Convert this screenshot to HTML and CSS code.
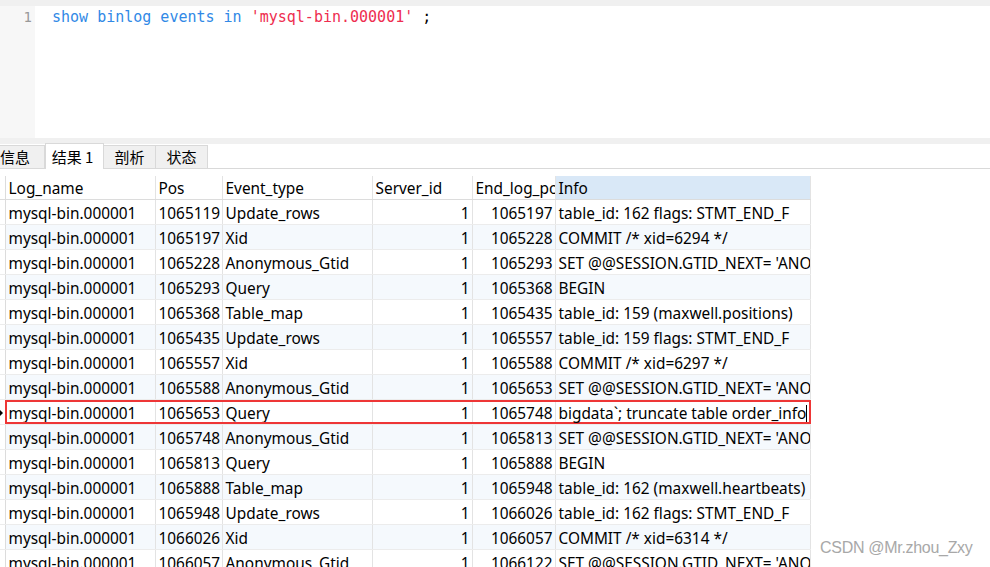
FILE: index.html
```html
<!DOCTYPE html>
<html>
<head>
<meta charset="utf-8">
<link rel="stylesheet" href="styles.css">
</head>
<body>
<div class="app">
  <div class="topstrip"></div>
  <div class="editor">
    <div class="gutter"><span class="lnum">1</span></div>
    <div class="code"><span class="kw">show binlog events in</span> <span class="str">'mysql-bin.000001'</span> ;</div>
  </div>
  <div class="splitter"></div>
  <div class="tabs">
    <div class="tab tab-first">信息</div>
    <div class="tab active">结果 1</div>
    <div class="tab">剖析</div>
    <div class="tab">状态</div>
  </div>
  <div class="gridwrap">
    <table class="grid">
      <colgroup>
        <col class="c0"><col class="c1"><col class="c2"><col class="c3"><col class="c4"><col class="c5"><col class="c6">
      </colgroup>
      <thead>
        <tr><th class="mk"></th><th>Log_name</th><th>Pos</th><th>Event_type</th><th>Server_id</th><th>End_log_pos</th><th class="sel">Info</th></tr>
      </thead>
      <tbody>
        <tr><td class="mk"></td><td>mysql-bin.000001</td><td>1065119</td><td>Update_rows</td><td class="r">1</td><td class="r">1065197</td><td>table_id: 162 flags: STMT_END_F</td></tr>
        <tr><td class="mk"></td><td>mysql-bin.000001</td><td>1065197</td><td>Xid</td><td class="r">1</td><td class="r">1065228</td><td>COMMIT /* xid=6294 */</td></tr>
        <tr><td class="mk"></td><td>mysql-bin.000001</td><td>1065228</td><td>Anonymous_Gtid</td><td class="r">1</td><td class="r">1065293</td><td>SET @@SESSION.GTID_NEXT= 'ANONYMOUS'</td></tr>
        <tr><td class="mk"></td><td>mysql-bin.000001</td><td>1065293</td><td>Query</td><td class="r">1</td><td class="r">1065368</td><td>BEGIN</td></tr>
        <tr><td class="mk"></td><td>mysql-bin.000001</td><td>1065368</td><td>Table_map</td><td class="r">1</td><td class="r">1065435</td><td>table_id: 159 (maxwell.positions)</td></tr>
        <tr><td class="mk"></td><td>mysql-bin.000001</td><td>1065435</td><td>Update_rows</td><td class="r">1</td><td class="r">1065557</td><td>table_id: 159 flags: STMT_END_F</td></tr>
        <tr><td class="mk"></td><td>mysql-bin.000001</td><td>1065557</td><td>Xid</td><td class="r">1</td><td class="r">1065588</td><td>COMMIT /* xid=6297 */</td></tr>
        <tr><td class="mk"></td><td>mysql-bin.000001</td><td>1065588</td><td>Anonymous_Gtid</td><td class="r">1</td><td class="r">1065653</td><td>SET @@SESSION.GTID_NEXT= 'ANONYMOUS'</td></tr>
        <tr class="current"><td class="mk"><span class="arrow"></span></td><td class="first"><span class="redbox"></span>mysql-bin.000001</td><td>1065653</td><td>Query</td><td class="r">1</td><td class="r">1065748</td><td class="last">bigdata`; truncate table order_info<span class="caret"></span></td></tr>
        <tr><td class="mk"></td><td>mysql-bin.000001</td><td>1065748</td><td>Anonymous_Gtid</td><td class="r">1</td><td class="r">1065813</td><td>SET @@SESSION.GTID_NEXT= 'ANONYMOUS'</td></tr>
        <tr><td class="mk"></td><td>mysql-bin.000001</td><td>1065813</td><td>Query</td><td class="r">1</td><td class="r">1065888</td><td>BEGIN</td></tr>
        <tr><td class="mk"></td><td>mysql-bin.000001</td><td>1065888</td><td>Table_map</td><td class="r">1</td><td class="r">1065948</td><td>table_id: 162 (maxwell.heartbeats)</td></tr>
        <tr><td class="mk"></td><td>mysql-bin.000001</td><td>1065948</td><td>Update_rows</td><td class="r">1</td><td class="r">1066026</td><td>table_id: 162 flags: STMT_END_F</td></tr>
        <tr><td class="mk"></td><td>mysql-bin.000001</td><td>1066026</td><td>Xid</td><td class="r">1</td><td class="r">1066057</td><td>COMMIT /* xid=6314 */</td></tr>
        <tr><td class="mk"></td><td>mysql-bin.000001</td><td>1066057</td><td>Anonymous_Gtid</td><td class="r">1</td><td class="r">1066122</td><td>SET @@SESSION.GTID_NEXT= 'ANONYMOUS'</td></tr>
      </tbody>
    </table>
    <div class="watermark">CSDN @Mr.zhou_Zxy</div>
  </div>
</div>
</body>
</html>
```
FILE: styles.css
```css
html, body {
  margin: 0;
  padding: 0;
  background: #ffffff;
  overflow: hidden;
}
.app {
  width: 990px;
  height: 567px;
  overflow: hidden;
  display: flex;
  flex-direction: column;
  font-family: "Noto Sans", "Noto Sans CJK SC", sans-serif;
}
.topstrip {
  height: 6px;
  background: #f0f0f0;
  flex: none;
}
.editor {
  height: 132px;
  display: flex;
  flex: none;
  background: #ffffff;
}
.gutter {
  width: 35px;
  background: #f7f7f7;
  display: flex;
  justify-content: flex-end;
  flex: none;
}
.lnum {
  font-family: "DejaVu Sans Mono", monospace;
  font-size: 14px;
  color: #999999;
  padding-right: 3px;
  line-height: 22px;
}
.code {
  font-family: "DejaVu Sans Mono", monospace;
  font-size: 15px;
  line-height: 22px;
  padding-left: 17px;
  color: #000000;
  white-space: pre;
}
.kw { color: #3189e6; }
.str { color: #ee2d50; }
.splitter {
  height: 6px;
  background: #f0f0f0;
  flex: none;
}
.tabs {
  height: 24px;
  display: flex;
  align-items: flex-end;
  border-bottom: 1px solid #d9d9d9;
  flex: none;
  font-family: "Noto Sans CJK SC", sans-serif;
  font-size: 15px;
}
.tab {
  height: 22px;
  line-height: 22px;
  background: #f0f0f0;
  border: 1px solid #d9d9d9;
  border-bottom: none;
  border-left: none;
  color: #000;
  width: 51px;
  box-sizing: content-box;
  text-align: center;
}
.tab-first {
  width: 44px;
  text-align: left;
}
.tab.active {
  background: #ffffff;
  height: 25px;
  line-height: 25px;
  width: 57px;
  margin-bottom: -1px;
  border-left: 1px solid #d9d9d9;
  text-indent: -4px;
}
.gridwrap {
  flex: 1;
  padding-top: 7px;
  position: relative;
}
.grid {
  table-layout: fixed;
  border-collapse: collapse;
  width: 810px;
  font-size: 15.4px;
  color: #000;
}
.c0 { width: 5px; }
.c1 { width: 150px; }
.c2 { width: 67px; }
.c3 { width: 150px; }
.c4 { width: 100px; }
.c5 { width: 83px; }
.c6 { width: 255px; }
.grid th, .grid td {
  height: 21px;
  padding: 3px 2px 0 3px;
  border-right: 1px solid #e3e3e3;
  border-bottom: 1px solid #ececec;
  white-space: nowrap;
  overflow: hidden;
  text-overflow: clip;
  text-align: left;
  font-weight: normal;
  line-height: 21px;
}
.grid th {
  border-bottom: 1px solid #dcdcdc;
  height: 21px;
  padding-top: 2px;
  line-height: 21px;
}
.grid th.sel {
  background: #d9e8f7;
}
.grid .mk {
  padding: 0;
  border-right: 1px solid #dcdcdc;
  position: relative;
  overflow: visible;
}
.grid td.r {
  text-align: right;
}
.grid tbody tr:nth-child(even) td {
  background: #f5f9fd;
}
.grid tbody tr td.mk {
  background: #ffffff;
}
.current td.first {
  position: relative;
  overflow: visible;
}
.redbox {
  position: absolute;
  left: -1px;
  top: 0;
  width: 806px;
  height: 24px;
  border: 2px solid #ee3636;
  box-sizing: border-box;
  pointer-events: none;
}
.current td.last {
  position: relative;
}
.arrow {
  position: absolute;
  left: 0;
  top: 10px;
  width: 0;
  height: 0;
  border-top: 3px solid transparent;
  border-bottom: 3px solid transparent;
  border-left: 3px solid #000;
}
.caret {
  position: absolute;
  right: 3px;
  top: 5px;
  width: 1px;
  height: 17px;
  background: #000;
}
.watermark {
  position: absolute;
  left: 820px;
  top: 370px;
  font-family: "Liberation Sans", Arial, sans-serif;
  font-size: 16px;
  color: #a8a8a8;
  letter-spacing: -0.3px;
}
```
